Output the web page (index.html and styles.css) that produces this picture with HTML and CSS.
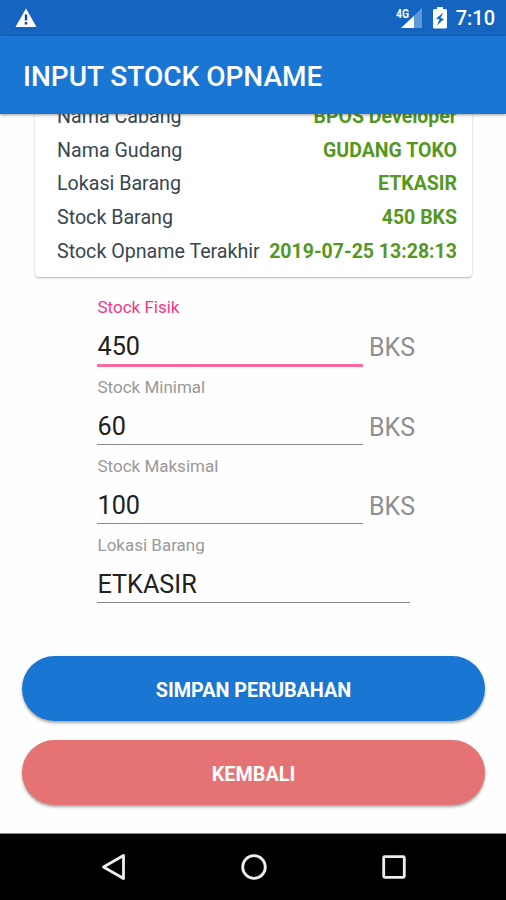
FILE: index.html
```html
<!DOCTYPE html>
<html lang="id">
<head>
    <meta charset="UTF-8">
    <meta name="viewport" content="width=device-width, initial-scale=1.0">
    <title>Input Stock Opname</title>
    <link rel="stylesheet" href="styles.css">
</head>
<body>
    <div class="statusbar">
        <svg class="warning" width="22" height="20" viewBox="0 0 22 20">
            <path d="M11 0.5L21.5 19H0.5Z" fill="#fff"/>
            <path d="M11 6.5v6M11 14v2.5" stroke="#1e3fa8" stroke-width="2.4"/>
        </svg>
        <div class="status-icons">
            <svg width="27" height="22" viewBox="0 0 27 22">
                <path d="M26 1V21H5Z" fill="#5f98d8"/>
                <path d="M18 9V21H5Z" fill="#fff"/>
                <text class="network" x="0" y="11" textLength="13" lengthAdjust="spacingAndGlyphs">4G</text>
            </svg>
            <svg class="battery" width="14" height="22" viewBox="0 0 14 22">
                <path d="M4 0h6v2h2.500q1.500 0 1.500 1.500v16.500q0 1.500-1.500 1.500h-11q-1.500 0-1.500-1.500v-16.500q0-1.500 1.500-1.500h2.500z" fill="#fff"/>
                <path d="M10.500 5.500L3 11.500L6.500 12.500L4 18.500L11 12L7.500 11Z" fill="#1565c0"/>
            </svg>
            <span class="clock">7:10</span>
        </div>
    </div>

    <header class="toolbar">
        <h1>INPUT STOCK OPNAME</h1>
    </header>

    <main class="content">
        <div class="card">
            <div class="row"><span>Nama Cabang</span><b>BPOS Developer</b></div>
            <div class="row"><span>Nama Gudang</span><b>GUDANG TOKO</b></div>
            <div class="row"><span>Lokasi Barang</span><b>ETKASIR</b></div>
            <div class="row"><span>Stock Barang</span><b>450 BKS</b></div>
            <div class="row"><span>Stock Opname Terakhir</span><b>2019-07-25 13:28:13</b></div>
        </div>

        <div class="form">
            <div class="field active">
                <label for="fisik">Stock Fisik</label>
                <div class="line">
                    <input id="fisik" type="text" value="450">
                    <span class="unit">BKS</span>
                </div>
            </div>
            <div class="field">
                <label for="minimal">Stock Minimal</label>
                <div class="line">
                    <input id="minimal" type="text" value="60">
                    <span class="unit">BKS</span>
                </div>
            </div>
            <div class="field">
                <label for="maksimal">Stock Maksimal</label>
                <div class="line">
                    <input id="maksimal" type="text" value="100">
                    <span class="unit">BKS</span>
                </div>
            </div>
            <div class="field">
                <label for="lokasi">Lokasi Barang</label>
                <div class="line">
                    <input id="lokasi" class="wide" type="text" value="ETKASIR">
                </div>
            </div>
        </div>

        <div class="actions">
            <button class="btn save">SIMPAN PERUBAHAN</button>
            <button class="btn back">KEMBALI</button>
        </div>
    </main>

    <nav class="navbar">
        <svg width="28" height="28" viewBox="0 0 28 28">
            <path d="M24.500 2.500V25.500L4.500 14Z"/>
        </svg>
        <svg width="28" height="28" viewBox="0 0 28 28">
            <circle cx="14" cy="14" r="11.300"/>
        </svg>
        <svg width="28" height="28" viewBox="0 0 28 28">
            <rect x="3.700" y="3.700" width="20.600" height="20.600" rx="1"/>
        </svg>
    </nav>
</body>
</html>
```
FILE: styles.css
```css
* {
    box-sizing: border-box;
}

body {
    margin: 0;
    height: 900px;
    display: flex;
    flex-direction: column;
    overflow: hidden;
    font-family: Roboto, sans-serif;
    background: #fefefe;
}

.statusbar {
    flex: none;
    height: 36px;
    padding: 0 11px 0 15px;
    display: flex;
    justify-content: space-between;
    align-items: center;
    background: #1565c0;
    color: white;
}
.status-icons {
    display: flex;
    align-items: center;
}
.network {
    font-size: 12px;
    font-weight: bold;
    fill: white;
}
.battery {
    margin: 0 9px 0 10px;
}
.clock {
    font-size: 20px;
    font-weight: 500;
    line-height: 38px;
}

.toolbar {
    flex: none;
    height: 78px;
    padding: 0 23px;
    display: flex;
    align-items: center;
    background: #1976d2;
    color: white;
    box-shadow: 0 1px 3px rgba(0, 0, 0, 0.4);
    z-index: 1;
}
.toolbar h1 {
    margin: 0;
    padding-top: 3px;
    font-size: 28px;
    font-weight: 500;
}

.content {
    flex: 1;
    min-height: 0;
    overflow: hidden;
    border-bottom: 1px solid #888;
}

/* scrolled under the toolbar */
.card {
    margin: -30px 34px 0 35px;
    padding: 16px 15px 9px 22px;
    border-radius: 4px;
    background: white;
    box-shadow: 0 1px 2px rgba(0, 0, 0, 0.3);
}
.row {
    height: 33.7px;
    display: flex;
    justify-content: space-between;
    font-size: 19.65px;
    line-height: 34px;
    color: #37474f;
    white-space: nowrap;
}
.row b {
    font-size: 19.5px;
    color: #55981f;
}

.form {
    margin: 19px 0 0 97px;
}
.field {
    height: 79.2px;
}
.field label {
    display: block;
    padding-left: 0.5px;
    font-size: 17px;
    line-height: 22px;
    color: #999;
}
.line {
    display: flex;
    align-items: flex-start;
}
.line input {
    width: 266px;
    height: 47px;
    padding: 11px 0 0 0.5px;
    border: none;
    border-bottom: 1.500px solid #888;
    border-radius: 0;
    outline: none;
    background: none;
    font: 25.2px Roboto, sans-serif;
    color: #212121;
}
.line .wide {
    width: 313px;
}
.unit {
    height: 48px;
    padding-left: 6px;
    font-size: 25px;
    line-height: 59px;
    color: #8e8e8e;
}
.active label {
    color: #f0388a;
}
.active input {
    height: 49px;
    border-bottom: 3px solid #ff6b9c;
}

.actions {
    margin: 43px 21px 0 22px;
    display: flex;
    flex-direction: column;
    gap: 19px;
}
.btn {
    height: 65px;
    padding-top: 5px;
    border: none;
    border-radius: 33px;
    font: bold 19.8px Roboto, sans-serif;
    color: white;
    box-shadow: 0 2px 3px rgba(0, 0, 0, 0.35);
}
.save { background: #1976d2; }
.back { background: #e57373; }

.navbar {
    flex: none;
    height: 66px;
    padding: 0 98px 0 99px;
    display: flex;
    justify-content: space-between;
    align-items: center;
    background: black;
}
.navbar svg {
    fill: none;
    stroke: #eee;
    stroke-width: 2.800;
    stroke-linejoin: round;
}
```
